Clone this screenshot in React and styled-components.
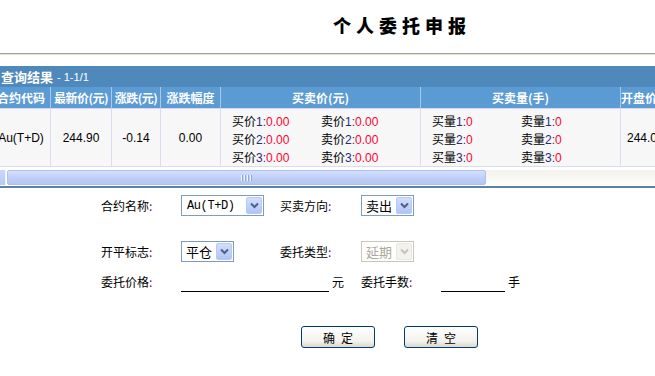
import React from 'react';
import styled, { createGlobalStyle } from 'styled-components';

const GlobalStyle = createGlobalStyle`
    html, body {
        margin: 0;
        padding: 0;
        background: #ffffff;
        overflow: hidden;
    }
    body {
        font-family: "Liberation Sans", "Noto Sans CJK SC", sans-serif;
        font-size: 12px;
        color: #000;
    }
`

const Page = styled.div`
    width: 655px;
    height: 376px;
    overflow: hidden;
`

const TitleBar = styled.div`
    height: 54px;
    padding-left: 333px;
    box-sizing: border-box;
    border-bottom: 1px solid #a8a293;
    box-shadow: 0 1px 0 #e4e1d8;
`

const Title = styled.h1`
    margin: 0;
    padding-top: 14px;
    font-family: "Noto Sans CJK SC", sans-serif;
    font-size: 18px;
    font-weight: 900;
    letter-spacing: 5px;
    line-height: 22px;
`

const ResultPanel = styled.div`
    margin-top: 12px;
`

const ResultBar = styled.div`
    height: 21px;
    background: #4f88ba;
    color: #fff;
    display: flex;
    align-items: center;
    padding-left: 1px;
`

const ResultTitle = styled.span`
    font-family: "Noto Sans CJK SC", sans-serif;
    font-weight: 700;
    font-size: 13px;
`

const ResultCount = styled.span`
    font-size: 11px;
    margin-left: 4px;
`

const TableWrap = styled.div`
    overflow: hidden;
`

const Grid = styled.div`
    display: grid;
    grid-template-columns: 59px 61px 49px 60px 200px 200px 80px;
    margin-left: -8px;
    width: 709px;
`

const HeadCell = styled.div`
    height: 22px;
    box-sizing: border-box;
    background: #5b9bd4;
    border-right: 1px solid #a9c9ea;
    border-bottom: 1px solid #d6d6f2;
    color: #fff;
    font-family: "Noto Sans CJK SC", sans-serif;
    font-weight: 700;
    font-size: 12px;
    white-space: nowrap;
    overflow: hidden;
    display: flex;
    align-items: center;
    justify-content: ${p => (p.$left ? 'flex-start' : 'center')};
    letter-spacing: ${p => (p.$tight ? '-0.5px' : '0')};
`

const DataCell = styled.div`
    height: 58px;
    box-sizing: border-box;
    background: #f7f7f7;
    border-right: 1px solid #dcdcf0;
    border-bottom: 1px solid #dcdcf0;
    display: flex;
    align-items: center;
    justify-content: ${p => (p.$left ? 'flex-start' : 'center')};
    padding-left: ${p => (p.$left ? '6px' : '0')};
    white-space: nowrap;
    font-size: 12px;
`

const QuoteBox = styled.div`
    display: grid;
    grid-template-columns: 89px 89px;
    padding: 2px 0 0 11px;
    width: 100%;
    box-sizing: border-box;
`

const QuoteItem = styled.div`
    height: 18px;
    line-height: 18px;
    white-space: nowrap;
    font-family: "Noto Sans CJK SC", sans-serif;
`

const QuoteNo = styled.span`
    font-family: "Liberation Sans", sans-serif;
    color: #2a2a7a;
`

const QuoteVal = styled.span`
    font-family: "Liberation Sans", sans-serif;
    color: #ff0033;
`

const ScrollRow = styled.div`
    display: flex;
    align-items: stretch;
    height: 15px;
    margin-top: 3px;
    border-bottom: 2px solid #5b82a6;
    padding-bottom: 1px;
`

const ScrollEnd = styled.div`
    width: 5px;
    background: linear-gradient(#cbd9fb, #b6c9f4);
    border-right: 1px solid #eef2fc;
`

const ScrollThumb = styled.div`
    width: 479px;
    margin-left: 1px;
    box-sizing: border-box;
    border: 1px solid #aebff0;
    border-radius: 2px;
    background: linear-gradient(#d3dffd, #bccdf7 60%, #b3c6f4);
    display: flex;
    align-items: center;
    justify-content: center;
    gap: 1px;
`

const Grip = styled.span`
    width: 1px;
    height: 6px;
    background: #eef3ff;
    border-right: 1px solid #8fa6dc;
`

const ScrollTrack = styled.div`
    flex: 1;
    background: linear-gradient(#f3f2ec, #fdfdfb);
`

const Form = styled.div`
    padding: 7px 0 0 101px;
`

const FieldRow = styled.div`
    display: grid;
    grid-template-columns: ${p => p.$cols};
    align-items: center;
    height: ${p => p.$h || '21px'};
    margin-top: ${p => p.$mt || '0'};
`

const Label = styled.span`
    font-family: "Noto Sans CJK SC", sans-serif;
    font-size: 12px;
    white-space: nowrap;
    padding-left: ${p => p.$pl || '0'};
`

const Colon = styled.span`
    color: #800080;
`

const Select = styled.div`
    display: flex;
    align-items: center;
    width: ${p => p.$w};
    height: 21px;
    box-sizing: border-box;
    border: 1px solid ${p => (p.$disabled ? '#c9c7ba' : '#7f9db9')};
    background: #fff;
    padding: 1px;
`

const SelectText = styled.span`
    flex: 1;
    padding-left: ${p => (p.$mono ? '4px' : '3px')};
    font-family: ${p => (p.$mono ? '"Liberation Mono", monospace' : '"Noto Sans CJK SC", sans-serif')};
    font-size: ${p => (p.$mono ? '12px' : '13px')};
    letter-spacing: ${p => (p.$mono ? '-0.4px' : '0')};
    color: ${p => (p.$disabled ? '#aca899' : '#000')};
    white-space: nowrap;
`

const ArrowBtn = styled.span`
    width: 16px;
    height: 17px;
    box-sizing: border-box;
    border-radius: 2px;
    border: 1px solid ${p => (p.$disabled ? '#e8e6de' : '#b7c9f4')};
    background: ${p => (p.$disabled ? '#f3f2ec' : 'linear-gradient(#d2defc, #b0c5f5)')};
    display: flex;
    align-items: center;
    justify-content: center;
`

const LineInput = styled.div`
    height: 19px;
    border-bottom: 1px solid #000;
    margin-top: 1px;
`

const ButtonRow = styled.div`
    display: flex;
    gap: 29px;
    padding-left: 301px;
    margin-top: 35px;
`

const Button = styled.button`
    width: 74px;
    height: 22px;
    border: 1px solid #003c74;
    border-radius: 3px;
    background: linear-gradient(#ffffff, #f3f2ed 70%, #dcd9cc);
    font-family: "Noto Sans CJK SC", sans-serif;
    font-size: 12px;
    letter-spacing: 6px;
    padding: 0 0 0 6px;
    color: #000;
`

function Arrow({ disabled }) {
    return (
        <ArrowBtn $disabled={disabled}>
            <svg width="9" height="7" viewBox="0 0 9 7">
                <path d="M1 1.5 L4.5 5 L8 1.5" fill="none" stroke={disabled ? '#c6c4b8' : '#4d6185'} strokeWidth="2" />
            </svg>
        </ArrowBtn>
    )
}

function Quote({ name, no, val }) {
    return (
        <QuoteItem>
            {name}<QuoteNo>{no}:</QuoteNo><QuoteVal>{val}</QuoteVal>
        </QuoteItem>
    )
}

const heads = ['合约代码', '最新价(元)', '涨跌(元)', '涨跌幅度', '买卖价(元)', '买卖量(手)', '开盘价']

export default function App() {
    return (
        <Page>
            <GlobalStyle />
            <TitleBar>
                <Title>个人委托申报</Title>
            </TitleBar>

            <ResultPanel>
                <ResultBar>
                    <ResultTitle>查询结果</ResultTitle>
                    <ResultCount>- 1-1/1</ResultCount>
                </ResultBar>
                <TableWrap>
                    <Grid>
                        {heads.map((h, i) => (
                            <HeadCell key={h} $left={i === 6} $tight={i === 1 || i === 2}>{h}</HeadCell>
                        ))}
                        <DataCell>Au(T+D)</DataCell>
                        <DataCell>244.90</DataCell>
                        <DataCell>-0.14</DataCell>
                        <DataCell>0.00</DataCell>
                        <DataCell>
                            <QuoteBox>
                                <Quote name="买价" no="1" val="0.00" />
                                <Quote name="卖价" no="1" val="0.00" />
                                <Quote name="买价" no="2" val="0.00" />
                                <Quote name="卖价" no="2" val="0.00" />
                                <Quote name="买价" no="3" val="0.00" />
                                <Quote name="卖价" no="3" val="0.00" />
                            </QuoteBox>
                        </DataCell>
                        <DataCell>
                            <QuoteBox>
                                <Quote name="买量" no="1" val="0" />
                                <Quote name="卖量" no="1" val="0" />
                                <Quote name="买量" no="2" val="0" />
                                <Quote name="卖量" no="2" val="0" />
                                <Quote name="买量" no="3" val="0" />
                                <Quote name="卖量" no="3" val="0" />
                            </QuoteBox>
                        </DataCell>
                        <DataCell $left>244.00</DataCell>
                    </Grid>
                </TableWrap>
                <ScrollRow>
                    <ScrollEnd />
                    <ScrollThumb>
                        <Grip /><Grip /><Grip /><Grip />
                    </ScrollThumb>
                    <ScrollTrack />
                </ScrollRow>
            </ResultPanel>

            <Form>
                <FieldRow $cols="80px 99px 81px auto">
                    <Label>合约名称<Colon>:</Colon></Label>
                    <Select $w="83px">
                        <SelectText $mono>Au(T+D)</SelectText>
                        <Arrow />
                    </Select>
                    <Label>买卖方向<Colon>:</Colon></Label>
                    <Select $w="53px">
                        <SelectText>卖出</SelectText>
                        <Arrow />
                    </Select>
                </FieldRow>
                <FieldRow $cols="80px 99px 81px auto" $mt="25px">
                    <Label>开平标志<Colon>:</Colon></Label>
                    <Select $w="53px">
                        <SelectText>平仓</SelectText>
                        <Arrow />
                    </Select>
                    <Label>委托类型<Colon>:</Colon></Label>
                    <Select $w="53px" $disabled>
                        <SelectText $disabled>延期</SelectText>
                        <Arrow disabled />
                    </Select>
                </FieldRow>
                <FieldRow $cols="80px 148px 32px 80px 64px auto" $h="20px" $mt="9px">
                    <Label>委托价格<Colon>:</Colon></Label>
                    <LineInput />
                    <Label $pl="3px">元</Label>
                    <Label>委托手数<Colon>:</Colon></Label>
                    <LineInput />
                    <Label $pl="3px">手</Label>
                </FieldRow>
            </Form>

            <ButtonRow>
                <Button>确定</Button>
                <Button>清空</Button>
            </ButtonRow>
        </Page>
    )
}
